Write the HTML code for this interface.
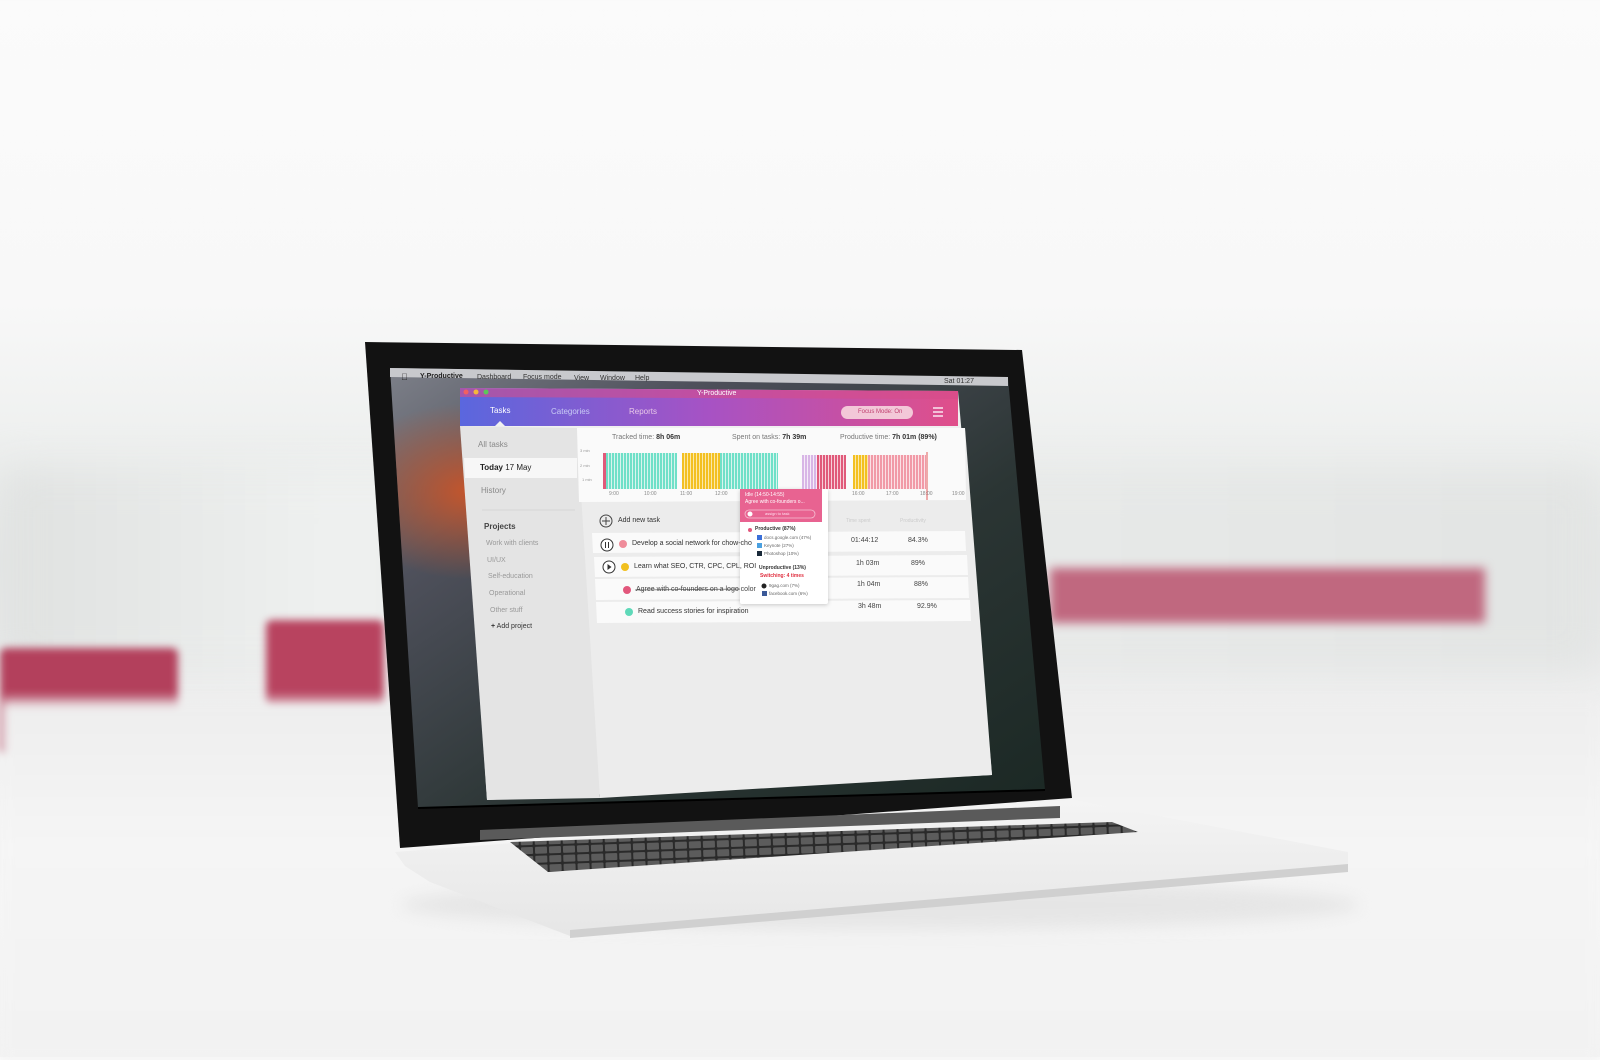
<!DOCTYPE html>
<html><head><meta charset="utf-8"><style>
*{margin:0;padding:0;box-sizing:border-box}
body{width:1600px;height:1057px;overflow:hidden;position:relative;font-family:"Liberation Sans",sans-serif;
background:linear-gradient(180deg,#fbfbfb 0,#f8f8f8 300px,#eceeed 470px,#e5e7e6 560px,#e9eaea 640px,#f2f2f2 720px,#f6f6f6 900px,#f3f3f3 1057px)}
.a{position:absolute}
.t{position:absolute;font-size:7px;color:#555;white-space:nowrap}
svg{position:absolute;left:0;top:0}
.bar{position:absolute}
</style></head><body>
<div class="a" style="left:0;top:470px;width:1600px;height:200px;background:linear-gradient(90deg,#dfe1e0,#eef0ef 20%,#e8eae9 60%,#e2e4e3);filter:blur(20px)"></div>
<div class="a" style="left:0;top:648px;width:178px;height:105px;background:#b3405c;filter:blur(4px);border-radius:6px"></div>
<div class="a" style="left:266px;top:620px;width:118px;height:88px;background:#b8435f;filter:blur(4px);border-radius:6px"></div>
<div class="a" style="left:1050px;top:568px;width:435px;height:55px;background:#c0687f;filter:blur(5px)"></div>
<div class="a" style="left:0;top:700px;width:1600px;height:360px;background:linear-gradient(180deg,#eeeeee,#f5f5f5 40%,#f2f2f2);filter:blur(6px)"></div>
<svg width="1600" height="1057">
<defs>
<linearGradient id="wall" x1="0" y1="0" x2="1" y2="1">
<stop offset="0" stop-color="#7d8089"/><stop offset="0.25" stop-color="#4e505b"/><stop offset="0.6" stop-color="#2b3534"/><stop offset="1" stop-color="#1b2824"/></linearGradient>
<radialGradient id="org" cx="0.12" cy="0.28" r="0.2"><stop offset="0" stop-color="#c4552c"/><stop offset="1" stop-color="#c4552c" stop-opacity="0"/></radialGradient>
<linearGradient id="hdr" x1="0" x2="1"><stop offset="0" stop-color="#5a67de"/><stop offset="0.5" stop-color="#a752c4"/><stop offset="1" stop-color="#e04f8a"/></linearGradient>
<linearGradient id="base" x1="0" y1="0" x2="0" y2="1"><stop offset="0" stop-color="#f4f4f4"/><stop offset="1" stop-color="#e6e6e6"/></linearGradient>
<pattern id="keys" width="14" height="9" patternUnits="userSpaceOnUse" patternTransform="rotate(-2)"><rect width="14" height="9" fill="#2a2a2a"/><rect x="1" y="1" width="12" height="7" rx="1" fill="#5c5c5c"/></pattern>
</defs>
<ellipse cx="880" cy="905" rx="480" ry="25" fill="#d8d8d8" opacity="0.5" filter="blur(8px)"/>
<polygon points="395,852 1075,800 1348,852 1348,870 570,936 430,882 405,866" fill="url(#base)"/>
<polygon points="570,930 1348,864 1348,872 570,938" fill="#d0d0d0"/>
<polygon points="510,842 1112,822 1138,832 548,872" fill="url(#keys)"/>
<polygon points="365,342 1022,350 1072,798 400,848" fill="#121212"/>
<polygon points="480,830 1060,806 1060,818 480,840" fill="#5a5a5a"/>
<polygon points="390,368 1008,378 1045,790 418,808" fill="url(#wall)"/>
<polygon points="390,368 1008,378 1045,790 418,808" fill="url(#org)"/>
<polygon points="390,368 1008,377 1008,386 390,377" fill="#c8c9cd"/>
<polygon points="460,388 958,391 992,775 487,800" fill="#f0f0f0"/>
<polygon points="577,428 965,428 992,775 600,798" fill="#ececec"/>
<polygon points="460,426 577,428 600,798 487,800" fill="#e4e4e4"/>
<polygon points="464,458 577,458 577,478 465,478" fill="#f7f7f7"/>
<polygon points="577,428 965,428 966,500 579,502" fill="#fafafa"/>
<polygon points="460,388 958,391 958,426 460,426" fill="url(#hdr)"/>
<polygon points="460,388 958,391 958,399 460,397" fill="#d64c8b" opacity="0.6"/>
<polygon points="495,426 500,421 505,426" fill="#f0f0f0"/>
<circle cx="466" cy="392" r="2.5" fill="#f26060"/><circle cx="476" cy="392" r="2.5" fill="#f5b83a"/><circle cx="486" cy="392" r="2.5" fill="#5bc85a"/>
<rect x="841" y="406" width="72" height="13" rx="6.5" fill="#f3c8d8"/>
<g stroke="#fff" stroke-width="1.3"><line x1="933" y1="408" x2="943" y2="408"/><line x1="933" y1="412" x2="943" y2="412"/><line x1="933" y1="416" x2="943" y2="416"/></g>
<line x1="482" y1="510" x2="575" y2="510" stroke="#d6d6d6"/>
<polygon points="592,533 965,531 966,551 593,553" fill="#fafafa"/>
<polygon points="594,557 967,555 968,575 595,577" fill="#fafafa"/>
<polygon points="595,579 968,577 969,598 596,600" fill="#fafafa"/>
<polygon points="596,602 970,600 971,621 597,623" fill="#fafafa"/>
<circle cx="606" cy="521" r="6" fill="none" stroke="#444"/><path d="M606 517v8M602 521h8" stroke="#444"/>
<circle cx="607" cy="545" r="6" fill="#fff" stroke="#333"/><path d="M605.5 542v6M608.5 542v6" stroke="#333"/>
<circle cx="609" cy="567" r="6" fill="#fff" stroke="#333"/><path d="M607.5 564l4 3-4 3z" fill="#333"/>
<circle cx="623" cy="544" r="4" fill="#ef8c9a"/><circle cx="625" cy="567" r="4" fill="#f1c01f"/>
<circle cx="627" cy="590" r="4" fill="#e2577c"/><circle cx="629" cy="612" r="4" fill="#5fd9b9"/>
<line x1="635" y1="590" x2="748" y2="589" stroke="#666" stroke-width="0.7"/>
<rect x="740" y="489" width="88" height="115" rx="2" fill="#fff" style="filter:drop-shadow(0 1px 2px rgba(0,0,0,.2))"/>
<rect x="740" y="489" width="82" height="33" fill="#e86391"/>
<rect x="745" y="510" width="70" height="8" rx="4" fill="none" stroke="#f5c0d2" stroke-width="0.8"/>
<circle cx="750" cy="514" r="2.5" fill="#fff"/>
<circle cx="750" cy="530" r="2" fill="#e2577c"/>
<rect x="757" y="535" width="5" height="5" fill="#3a6fd8"/><rect x="757" y="543" width="5" height="5" fill="#4aa0e0"/><rect x="757" y="551" width="5" height="5" fill="#1a2a3a"/>
<rect x="762" y="591" width="5" height="5" fill="#3b5998"/><circle cx="764" cy="586" r="2.5" fill="#222"/>
<line x1="927" y1="452" x2="927" y2="500" stroke="#d33" stroke-width="0.8"/>
<line x1="418" y1="808" x2="1045" y2="790" stroke="#000" stroke-width="2"/>
</svg>
<div class="bar" style="left:603px;top:453px;width:3px;height:36px;background:#e05a7a"></div>
<div class="bar" style="left:606px;top:453px;width:71px;height:36px;background:repeating-linear-gradient(90deg,#6fe0c8 0 2px,#d8f4ee 2px 3px)"></div>
<div class="bar" style="left:682px;top:453px;width:38px;height:36px;background:repeating-linear-gradient(90deg,#f3c021 0 2px,#fbe8a9 2px 3px)"></div>
<div class="bar" style="left:720px;top:453px;width:58px;height:36px;background:repeating-linear-gradient(90deg,#6fe0c8 0 2px,#d8f4ee 2px 3px)"></div>
<div class="bar" style="left:802px;top:455px;width:15px;height:34px;background:repeating-linear-gradient(90deg,#d8b6e6 0 2px,#f5ecf8 2px 3px)"></div>
<div class="bar" style="left:817px;top:455px;width:29px;height:34px;background:repeating-linear-gradient(90deg,#e05a7a 0 2px,#f7d0da 2px 3px)"></div>
<div class="bar" style="left:853px;top:455px;width:15px;height:34px;background:repeating-linear-gradient(90deg,#f3c021 0 2px,#fbe8a9 2px 3px)"></div>
<div class="bar" style="left:868px;top:455px;width:58px;height:34px;background:repeating-linear-gradient(90deg,#f19aa7 0 2px,#fbe1e5 2px 3px)"></div>

<div class="t" style="left:401px;top:372px;font-size:9px;color:#222">&#63743;</div>
<div class="t" style="left:420px;top:373px;color:#222;font-weight:bold">Y-Productive</div>
<div class="t" style="left:477px;top:374px;color:#333">Dashboard</div>
<div class="t" style="left:523px;top:374px;color:#333">Focus mode</div>
<div class="t" style="left:574px;top:375px;color:#333">View</div>
<div class="t" style="left:600px;top:375px;color:#333">Window</div>
<div class="t" style="left:635px;top:375px;color:#333">Help</div>
<div class="t" style="left:944px;top:378px;color:#333">Sat 01:27</div>
<div class="t" style="left:697px;top:390px;color:#fff">Y-Productive</div>
<div class="t" style="left:490px;top:406px;color:#fff;font-size:8px">Tasks</div>
<div class="t" style="left:551px;top:407px;color:#c9ccf5;font-size:8px">Categories</div>
<div class="t" style="left:629px;top:407px;color:#e8c8e8;font-size:8px">Reports</div>
<div class="t" style="left:858px;top:409px;color:#c04070;font-size:6px">Focus Mode: On</div>
<div class="t" style="left:478px;top:440px;color:#888;font-size:8px">All tasks</div>
<div class="t" style="left:480px;top:463px;color:#222;font-size:8px"><b>Today</b> 17 May</div>
<div class="t" style="left:481px;top:486px;color:#888;font-size:8px">History</div>
<div class="t" style="left:484px;top:522px;color:#444;font-size:8px;font-weight:bold">Projects</div>
<div class="t" style="left:486px;top:540px;color:#999">Work with clients</div>
<div class="t" style="left:487px;top:557px;color:#999">UI/UX</div>
<div class="t" style="left:488px;top:573px;color:#999">Self-education</div>
<div class="t" style="left:489px;top:590px;color:#999">Operational</div>
<div class="t" style="left:490px;top:607px;color:#999">Other stuff</div>
<div class="t" style="left:491px;top:623px;color:#333"><b>+</b> Add project</div>
<div class="t" style="left:612px;top:434px;color:#777">Tracked time: <b style="color:#333">8h 06m</b></div>
<div class="t" style="left:732px;top:434px;color:#777">Spent on tasks: <b style="color:#333">7h 39m</b></div>
<div class="t" style="left:840px;top:434px;color:#777">Productive time: <b style="color:#333">7h 01m (89%)</b></div>
<div class="t" style="left:580px;top:448px;font-size:4px;color:#999">3 min</div>
<div class="t" style="left:580px;top:463px;font-size:4px;color:#999">2 min</div>
<div class="t" style="left:582px;top:477px;font-size:4px;color:#999">1 min</div>
<div class="t" style="left:609px;top:491px;font-size:5px;color:#888">9:00</div>
<div class="t" style="left:644px;top:491px;font-size:5px;color:#888">10:00</div>
<div class="t" style="left:680px;top:491px;font-size:5px;color:#888">11:00</div>
<div class="t" style="left:715px;top:491px;font-size:5px;color:#888">12:00</div>
<div class="t" style="left:852px;top:491px;font-size:5px;color:#888">16:00</div>
<div class="t" style="left:886px;top:491px;font-size:5px;color:#888">17:00</div>
<div class="t" style="left:920px;top:491px;font-size:5px;color:#888">18:00</div>
<div class="t" style="left:952px;top:491px;font-size:5px;color:#888">19:00</div>
<div class="t" style="left:618px;top:517px;color:#333">Add new task</div>
<div class="t" style="left:846px;top:518px;color:#ccc;font-size:5px">Time spent</div>
<div class="t" style="left:900px;top:518px;color:#ccc;font-size:5px">Productivity</div>
<div class="t" style="left:632px;top:540px;color:#333">Develop a social network for chow-cho</div>
<div class="t" style="left:634px;top:563px;color:#333">Learn what SEO, CTR, CPC, CPL, ROI</div>
<div class="t" style="left:636px;top:586px;color:#444">Agree with co-founders on a logo color</div>
<div class="t" style="left:638px;top:608px;color:#333">Read success stories for inspiration</div>
<div class="t" style="left:851px;top:537px;color:#444">01:44:12</div>
<div class="t" style="left:908px;top:537px;color:#444">84.3%</div>
<div class="t" style="left:856px;top:560px;color:#444">1h 03m</div>
<div class="t" style="left:911px;top:560px;color:#444">89%</div>
<div class="t" style="left:857px;top:581px;color:#444">1h 04m</div>
<div class="t" style="left:914px;top:581px;color:#444">88%</div>
<div class="t" style="left:858px;top:603px;color:#444">3h 48m</div>
<div class="t" style="left:917px;top:603px;color:#444">92.9%</div>
<div class="t" style="left:745px;top:492px;color:#fff;font-size:5px">Idle (14:50-14:55)</div>
<div class="t" style="left:745px;top:499px;color:#fff;font-size:5px">Agree with co-founders o...</div>
<div class="t" style="left:765px;top:511px;color:#fde;font-size:4px">assign to task</div>
<div class="t" style="left:755px;top:526px;color:#333;font-size:5px;font-weight:bold">Productive (87%)</div>
<div class="t" style="left:764px;top:535px;color:#666;font-size:4.5px">docs.google.com (47%)</div>
<div class="t" style="left:764px;top:543px;color:#666;font-size:4.5px">Keynote (27%)</div>
<div class="t" style="left:764px;top:551px;color:#666;font-size:4.5px">Photoshop (10%)</div>
<div class="t" style="left:759px;top:565px;color:#333;font-size:5px;font-weight:bold">Unproductive (13%)</div>
<div class="t" style="left:760px;top:573px;color:#e03040;font-size:5px;font-weight:bold">Switching: 4 times</div>
<div class="t" style="left:769px;top:583px;color:#666;font-size:4.5px">9gag.com (7%)</div>
<div class="t" style="left:769px;top:591px;color:#666;font-size:4.5px">facebook.com (6%)</div>
</body></html>
